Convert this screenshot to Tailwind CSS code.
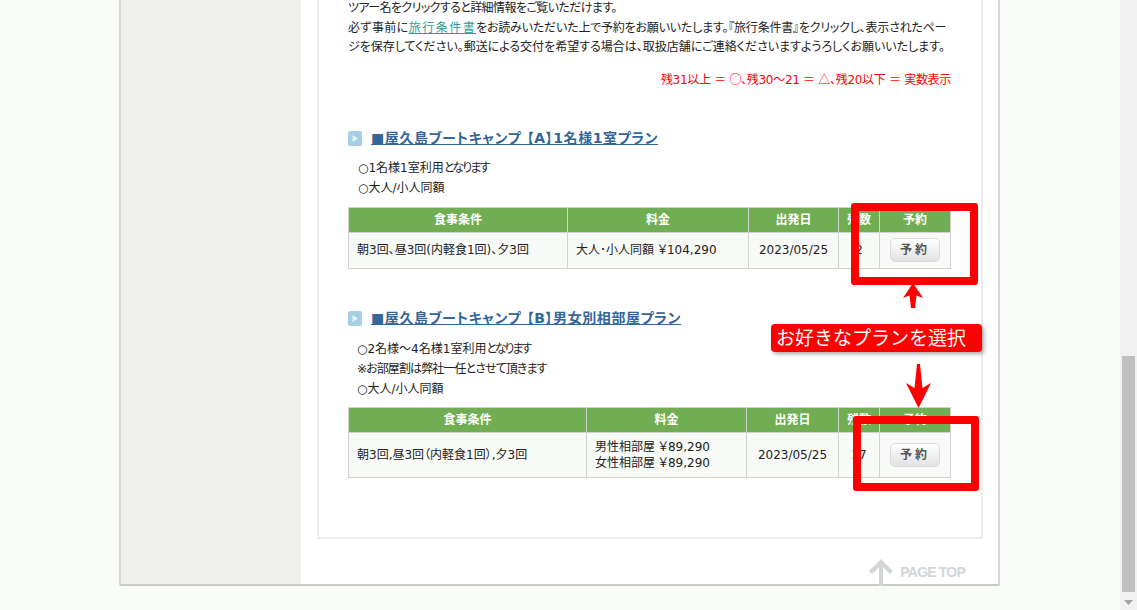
<!DOCTYPE html>
<html lang="ja">
<head>
    <meta charset="UTF-8">
    <title>屋久島ブートキャンプ</title>
    <script src="https://cdn.jsdelivr.net/npm/@tailwindcss/browser@4"></script>
</head>
<body class="bg-[#f9fbf8] overflow-hidden font-['DejaVu_Sans','Noto_Sans_CJK_JP',sans-serif] text-[12px] text-[#222] [font-feature-settings:'palt']">

<div class="relative flex h-[610px] w-[1137px] overflow-hidden">
    <!-- page column -->
    <div class="w-[1120px] pl-[119px]">
        <div class="flex h-[586px] w-[881px] border-x-2 border-b-2 border-x-[#d6d6d4] border-b-[#c9c9c7] rounded-b-[2px] shadow-[inset_0_-2px_2px_#e8e8e8]">
            <div class="w-[180px] bg-[#eeeeea]"></div>
            <div class="w-[697px] bg-white pl-[16px]">
                <div class="flow-root h-[539px] w-[666px] border-x-2 border-b-2 border-[#eeeeee] pl-[29px]">
                    <div class="w-[603px]">
                        <div class="-mt-[1px] whitespace-nowrap leading-[19.5px]">
                            <p class="tracking-[-0.6px]">ツアー名をクリックすると詳細情報をご覧いただけます。</p>
                            <p><span class="tracking-[0.4px]">必ず事前に</span><a class="text-[#2a9d96] underline tracking-[1.5px]">旅行条件書</a><span class="tracking-[-0.2px]">をお読みいただいた上で予約をお願いいたします。『旅行条件書』をクリックし、表示されたペー</span><br>ジを保存してください。郵送による交付を希望する場合は、取扱店舗にご連絡くださいますようろしくお願いいたします。</p>
                        </div>

                        <p class="mt-[11px] text-right leading-[20px] tracking-[-0.3px] text-[#ff0000]">残31以上 ＝ <span class="font-['Noto_Sans_CJK_JP']">○</span>、残30～21 ＝ <span class="font-['Noto_Sans_CJK_JP']">△</span>、残20以下 ＝ 実数表示</p>

                        <div class="mt-[39px] flex h-[20px] items-center">
                            <svg class="h-[15px] w-[14px]" viewBox="0 0 14 15"><rect width="14" height="15" rx="2" fill="#a6cfe6"/><path d="M4.5 4v7l5.5-3.5z" fill="#e9f4fa"/></svg>
                            <a class="ml-[9px] text-[14px] font-bold tracking-[0.6px] text-[#336699] underline">■屋久島ブートキャンプ 【A】1名様1室プラン</a>
                        </div>
                        <div class="mt-[9px] pl-[10px] leading-[20px]">
                            <p>○1名様1室利用<span class="tracking-[-1.8px]">となります</span></p>
                            <p>○大人/小人同額</p>
                        </div>

                        <table class="mt-[9px] w-[602px] table-fixed border-collapse text-center">
                            <colgroup>
                                <col class="w-[219px]"><col class="w-[181px]"><col class="w-[90px]"><col class="w-[41px]"><col class="w-[71px]">
                            </colgroup>
                            <tr class="h-[25px] bg-[#71ad52] font-bold text-white">
                                <th class="border border-[#d0d4cc]">食事条件</th>
                                <th class="border border-[#d0d4cc]">料金</th>
                                <th class="border border-[#d0d4cc]">出発日</th>
                                <th class="border border-[#d0d4cc]">残数</th>
                                <th class="border border-[#d0d4cc]">予約</th>
                            </tr>
                            <tr class="h-[36px] bg-[#f8faf7]">
                                <td class="border border-[#d0d4cc] pl-[8px] text-left">朝3回、昼3回(内軽食1回)、夕3回</td>
                                <td class="border border-[#d0d4cc] pl-[8px] text-left">大人･小人同額 ￥104,290</td>
                                <td class="border border-[#d0d4cc]">2023/05/25</td>
                                <td class="border border-[#d0d4cc]">2</td>
                                <td class="border border-[#d0d4cc]"><button class="h-[24px] w-[50px] rounded-[5px] border border-[#dcdcdc] bg-gradient-to-b from-white to-[#e2e2e2] font-bold tracking-[3px] text-[#555]">予約</button></td>
                            </tr>
                        </table>

                        <div class="mt-[40px] flex h-[20px] items-center">
                            <svg class="h-[15px] w-[14px]" viewBox="0 0 14 15"><rect width="14" height="15" rx="2" fill="#a6cfe6"/><path d="M4.5 4v7l5.5-3.5z" fill="#e9f4fa"/></svg>
                            <a class="ml-[9px] text-[14px] font-bold tracking-[0.6px] text-[#336699] underline">■屋久島ブートキャンプ 【B】男女別相部屋プラン</a>
                        </div>
                        <div class="mt-[10px] pl-[9px] leading-[20px]">
                            <p>○2名様～4名様1室利用<span class="tracking-[-2px]">となります</span></p>
                            <p class="tracking-[-0.9px]">※お部屋割は弊社一任とさせて頂きます</p>
                            <p>○大人/小人同額</p>
                        </div>

                        <table class="mt-[8px] w-[602px] table-fixed border-collapse text-center">
                            <colgroup>
                                <col class="w-[238px]"><col class="w-[160px]"><col class="w-[92px]"><col class="w-[41px]"><col class="w-[71px]">
                            </colgroup>
                            <tr class="h-[25px] bg-[#71ad52] font-bold text-white">
                                <th class="border border-[#d0d4cc]">食事条件</th>
                                <th class="border border-[#d0d4cc]">料金</th>
                                <th class="border border-[#d0d4cc]">出発日</th>
                                <th class="border border-[#d0d4cc]">残数</th>
                                <th class="border border-[#d0d4cc]">予約</th>
                            </tr>
                            <tr class="h-[45px] bg-[#f8faf7]">
                                <td class="border border-[#d0d4cc] pl-[8px] text-left">朝3回,昼3回（内軽食1回）,夕3回</td>
                                <td class="border border-[#d0d4cc] pl-[8px] text-left leading-[16px]">男性相部屋 ￥89,290<br>女性相部屋 ￥89,290</td>
                                <td class="border border-[#d0d4cc]">2023/05/25</td>
                                <td class="border border-[#d0d4cc]">17</td>
                                <td class="border border-[#d0d4cc]"><button class="h-[24px] w-[50px] rounded-[5px] border border-[#dcdcdc] bg-gradient-to-b from-white to-[#e2e2e2] font-bold tracking-[3px] text-[#555]">予約</button></td>
                            </tr>
                        </table>
                    </div>
                </div>
                <div class="mt-[20px] flex w-[648px] items-start justify-end">
                    <svg class="h-[27px] w-[24px]" viewBox="0 0 24 27"><path d="M12 0 0 12l3 3 7-7v19h4V8l7 7 3-3z" fill="#d2d6d4"/></svg>
                    <span class="ml-[7px] mt-[5px] font-['Liberation_Sans'] text-[14px] font-bold leading-[16px] tracking-[-0.8px] text-[#d2d6d8]">PAGE TOP</span>
                </div>
            </div>
        </div>
    </div>

    <!-- scrollbar -->
    <div class="relative h-full w-[17px] bg-[#f1f1f1]">
        <div class="absolute left-[2px] top-[356px] h-[236px] w-[13px] bg-[#c0c0c0]"></div>
        <svg class="absolute bottom-[5px] left-[4px] h-[5px] w-[9px]" viewBox="0 0 9 5"><path d="M0 0h9L4.500 5z" fill="#a3a3a3"/></svg>
    </div>

    <!-- red annotations over the screenshot -->
    <div class="absolute left-[851px] top-[203px] h-[82px] w-[127px] rounded-[3px] border-[8px] border-[#ff0000]"></div>
    <div class="absolute left-[853px] top-[416px] h-[75px] w-[126px] rounded-[3px] border-[8px] border-[#ff0000]"></div>
    <div class="absolute left-[771px] top-[324px] flex h-[28px] w-[211px] items-center rounded-[4px] bg-[#ff0000] pl-[5px] text-[19px] leading-none text-white shadow-[2px_2px_4px_rgba(0,0,0,0.35)] [font-feature-settings:normal]">お好きなプランを選択</div>
    <svg class="absolute left-[903px] top-[283px] h-[26px] w-[20px]" viewBox="0 0 20 26"><path d="M10 0 20 15l-6.500-2.500L12 25H8L6.500 12.500 0 15z" fill="#ff0000"/></svg>
    <svg class="absolute left-[906px] top-[364px] h-[45px] w-[25px]" viewBox="0 0 25 45"><path d="M11 0h3l2.500 24 8.500-5L12.500 44 0 19l8.500 5z" fill="#ff0000"/></svg>
</div>

</body>
</html>
